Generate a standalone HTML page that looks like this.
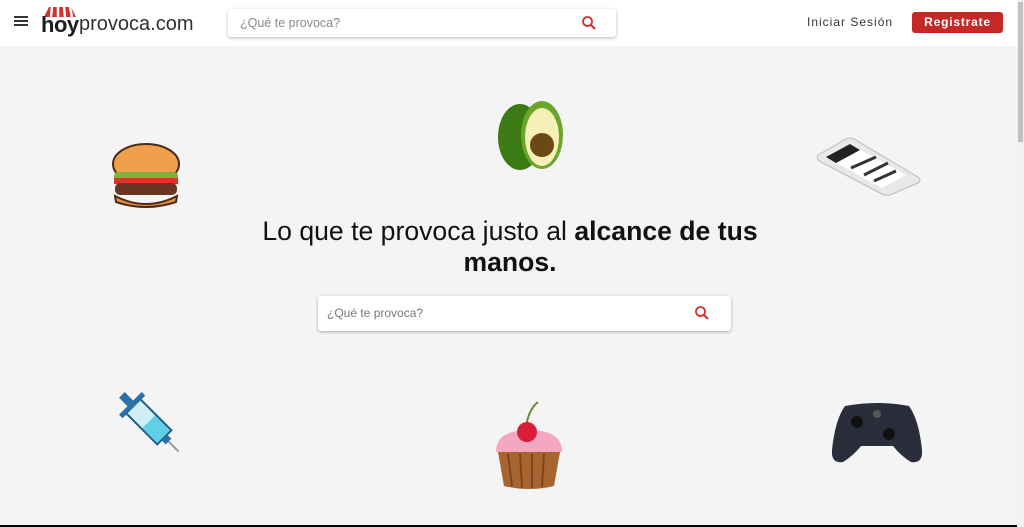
<!DOCTYPE html>
<html><head><meta charset="utf-8"><style>
*{box-sizing:border-box;margin:0;padding:0}
body{width:1024px;height:527px;overflow:hidden;background:#f4f4f4;font-family:"Liberation Sans",sans-serif;position:relative}
.hdr{position:absolute;left:0;top:0;width:1017px;height:46px;background:#fff}
.sb{position:absolute;background:#fff;border-radius:3px;box-shadow:0 1px 3px rgba(0,0,0,.3)}
.ph{position:absolute;color:#777;font-size:13px}
.scroll{position:absolute;right:0;top:0;width:7px;height:527px;background:#f1f1f1}
.thumb{position:absolute;right:1px;top:2px;width:5px;height:140px;background:#c1c1c1}
.ab{position:absolute}
</style></head><body>
<div class="hdr">
 <div style="position:absolute;left:14px;top:16px;width:14px;height:2px;background:#333;box-shadow:0 4px 0 #333,0 8px 0 #333"></div>
 <svg class="ab" style="left:41px;top:6px" width="38" height="12"><path d="M3 11 L8 1 H30 L35 11 Z" fill="#d32f2f"/><path d="M11 1 L10 11 M17 1 V11 M23 1 L24 11 M29 1 L31 11" stroke="#fff" stroke-width="2.5"/></svg>
 <div class="ab" style="left:41px;top:12px;font-size:22px;font-weight:bold;color:#1d1d1d;letter-spacing:-0.5px">hoy</div>
 <div class="ab" style="left:79px;top:13px;font-size:20px;color:#2e3136">provoca.com</div>
 <div class="sb" style="left:228px;top:9px;width:388px;height:28px"><span class="ph" style="left:12px;top:7px;font-size:12.5px;color:#888">¿Qué te provoca?</span>
 <svg class="ab" style="left:353px;top:6px" width="16" height="16"><circle cx="6.5" cy="6.5" r="4.5" fill="none" stroke="#d32f2f" stroke-width="1.8"/><path d="M10 10 L14 14" stroke="#d32f2f" stroke-width="2"/></svg></div>
 <div class="ab" style="left:807px;top:15px;font-size:12px;color:#333;letter-spacing:1px">Iniciar Sesión</div>
 <div class="ab" style="left:912px;top:12px;width:91px;height:21px;background:#c62828;border-radius:3px;color:#fff;font-size:12px;font-weight:bold;text-align:center;line-height:21px;letter-spacing:.8px">Registrate</div>
</div>
<!-- burger -->
<svg class="ab" style="left:110px;top:142px" width="72" height="66"><ellipse cx="36" cy="22" rx="33" ry="20" fill="#f0a04a" stroke="#4a2a1a" stroke-width="2"/><rect x="4" y="30" width="64" height="10" rx="4" fill="#7db33a"/><rect x="4" y="36" width="64" height="6" fill="#d8342a"/><rect x="5" y="41" width="62" height="12" rx="5" fill="#6b3523"/><path d="M5 54 Q36 70 67 54 L66 60 Q36 70 6 60Z" fill="#e8943e" stroke="#4a2a1a" stroke-width="2"/></svg>
<!-- avocado -->
<svg class="ab" style="left:494px;top:95px" width="76" height="76"><ellipse cx="26" cy="42" rx="22" ry="33" fill="#3c7a14"/><ellipse cx="48" cy="40" rx="21" ry="34" fill="#6ba52a"/><ellipse cx="48" cy="42" rx="17" ry="29" fill="#f6efb8"/><circle cx="48" cy="50" r="12" fill="#6a4a12"/></svg>
<!-- phone -->
<svg class="ab" style="left:816px;top:133px" width="106" height="64"><path d="M2 22 L30 6 Q34 4 38 6 L102 44 Q106 48 102 50 L74 62 Q70 63 66 61 L3 28 Q0 25 2 22Z" fill="#e8e8e8" stroke="#bbb"/><path d="M10 24 L34 11 L90 42 L66 55Z" fill="#fff"/><path d="M10 24 L34 11 L44 17 L20 30Z" fill="#222"/><path d="M35 35 L60 24 M48 42 L72 30 M58 48 L80 38" stroke="#333" stroke-width="3"/></svg>
<!-- syringe -->
<svg class="ab" style="left:113px;top:388px" width="80" height="76"><g transform="rotate(-45 40 38)"><rect x="30" y="10" width="20" height="44" fill="#cfeff5" stroke="#1c5c86" stroke-width="2"/><rect x="31" y="32" width="18" height="21" fill="#5fd0e6"/><rect x="24" y="6" width="32" height="5" fill="#2a6fa6"/><rect x="36" y="-6" width="8" height="12" fill="#2a6fa6"/><rect x="36" y="54" width="8" height="6" fill="#2a6fa6"/><rect x="39" y="60" width="2" height="14" fill="#999"/></g></svg>
<!-- cupcake -->
<svg class="ab" style="left:492px;top:400px" width="74" height="90"><path d="M34 28 Q36 10 46 2" stroke="#6a8a30" stroke-width="2" fill="none"/><path d="M4 52 Q4 30 37 30 Q70 30 70 52Z" fill="#f3a7c3"/><circle cx="35" cy="32" r="10" fill="#d81e3a"/><path d="M6 52 H68 L62 86 Q37 92 12 86Z" fill="#a8642e"/><path d="M16 54 L20 86 M28 54 L30 88 M40 54 L40 88 M52 54 L50 87" stroke="#7a4520" stroke-width="2"/></svg>
<!-- controller -->
<svg class="ab" style="left:831px;top:400px" width="92" height="66"><path d="M14 6 Q46 0 78 6 Q88 20 91 50 Q92 64 80 62 Q70 56 62 46 H30 Q22 56 12 62 Q0 64 1 50 Q4 20 14 6Z" fill="#2a2d3a"/><circle cx="26" cy="22" r="6" fill="#111"/><circle cx="58" cy="34" r="6" fill="#111"/><circle cx="46" cy="14" r="4" fill="#555"/></svg>
<div class="ab" style="left:240px;top:216px;width:540px;text-align:center;font-size:26.6px;line-height:31px;color:#111">Lo que te provoca justo al <b>alcance de tus manos.</b></div>
<div class="sb" style="left:318px;top:296px;width:413px;height:35px"><span class="ph" style="left:9px;top:10px;font-size:12px">¿Qué te provoca?</span>
<svg class="ab" style="left:376px;top:9px" width="16" height="16"><circle cx="6.5" cy="6.5" r="4.5" fill="none" stroke="#d32f2f" stroke-width="1.8"/><path d="M10 10 L14 14" stroke="#d32f2f" stroke-width="2"/></svg></div>
<div class="ab" style="left:0;top:525px;width:1024px;height:2px;background:#000"></div>
<div class="scroll"><div class="thumb"></div></div>
</body></html>
